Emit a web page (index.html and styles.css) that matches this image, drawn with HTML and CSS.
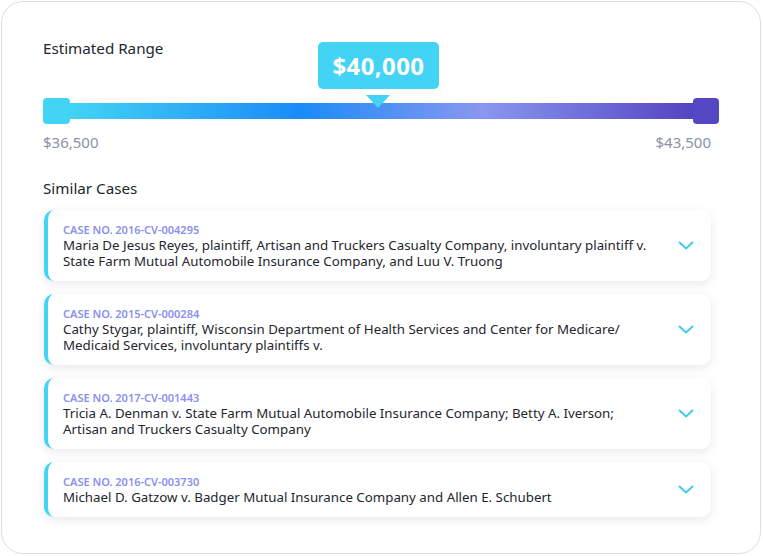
FILE: index.html
```html
<!DOCTYPE html>
<html lang="en">
<head>
<meta charset="utf-8">
<title>Estimated Range</title>
<link rel="stylesheet" href="styles.css">
</head>
<body>
<div class="panel">
  <h2 class="section-title">Estimated Range</h2>
  <div class="slider">
    <div class="tooltip">$40,000</div>
    <div class="tooltip-arrow"></div>
    <div class="thumb thumb-min"></div>
    <div class="track"></div>
    <div class="thumb thumb-max"></div>
  </div>
  <div class="range-labels">
    <span>$36,500</span>
    <span>$43,500</span>
  </div>
  <h2 class="section-title cases-title">Similar Cases</h2>
  <ul class="cases">
    <li class="case">
      <div class="case-text">
        <div class="case-no">CASE NO. 2016-CV-004295</div>
        <div class="case-name">Maria De Jesus Reyes, plaintiff, Artisan and Truckers Casualty Company, involuntary plaintiff v.<br>State Farm Mutual Automobile Insurance Company, and Luu V. Truong</div>
      </div>
      <svg class="chevron" viewBox="0 0 16 9" width="16" height="9"><path d="M1 1 L8 7.5 L15 1" fill="none" stroke="currentColor" stroke-width="2"/></svg>
    </li>
    <li class="case">
      <div class="case-text">
        <div class="case-no">CASE NO. 2015-CV-000284</div>
        <div class="case-name">Cathy Stygar, plaintiff, Wisconsin Department of Health Services and Center for Medicare/<br>Medicaid Services, involuntary plaintiffs v.</div>
      </div>
      <svg class="chevron" viewBox="0 0 16 9" width="16" height="9"><path d="M1 1 L8 7.5 L15 1" fill="none" stroke="currentColor" stroke-width="2"/></svg>
    </li>
    <li class="case">
      <div class="case-text">
        <div class="case-no">CASE NO. 2017-CV-001443</div>
        <div class="case-name">Tricia A. Denman v. State Farm Mutual Automobile Insurance Company; Betty A. Iverson;<br>Artisan and Truckers Casualty Company</div>
      </div>
      <svg class="chevron" viewBox="0 0 16 9" width="16" height="9"><path d="M1 1 L8 7.5 L15 1" fill="none" stroke="currentColor" stroke-width="2"/></svg>
    </li>
    <li class="case">
      <div class="case-text">
        <div class="case-no">CASE NO. 2016-CV-003730</div>
        <div class="case-name">Michael D. Gatzow v. Badger Mutual Insurance Company and Allen E. Schubert</div>
      </div>
      <svg class="chevron" viewBox="0 0 16 9" width="16" height="9"><path d="M1 1 L8 7.5 L15 1" fill="none" stroke="currentColor" stroke-width="2"/></svg>
    </li>
  </ul>
</div>
</body>
</html>
```
FILE: styles.css
```css
* { box-sizing: border-box; }
html, body { margin: 0; padding: 0; background: #ffffff; }
body { font-family: "Noto Sans", "Open Sans", sans-serif; color: #2b2f3b; }

.panel {
  margin: 1px;
  width: 760px;
  height: 553px;
  border: 1px solid #dcdee8;
  border-radius: 22px;
  padding: 36px 41px 0 41px;
  background: #fff;
}

.section-title {
  margin: 0;
  font-size: 15.2px;
  line-height: 20px;
  font-weight: 400;
  color: #23262f;
}

.slider {
  position: relative;
  margin-top: 40px;
  height: 26px;
  display: flex;
  align-items: center;
}
.track {
  flex: 1;
  height: 16px;
  margin: 0 -2px;
  background: linear-gradient(90deg, #43d4f4 0%, #1a8bf8 37%, #8a97f0 66%, #5443c0 100%);
}
.thumb {
  position: relative;
  z-index: 1;
  width: 27px;
  height: 26px;
  border-radius: 4px;
  flex: none;
}
.thumb-min { background: #42d3f5; }
.thumb-max { background: #5546c3; width: 26px; }

.tooltip {
  position: absolute;
  left: 275px;
  top: -56px;
  width: 121px;
  height: 47px;
  border-radius: 5px;
  background: #42d3f5;
  color: #fff;
  font-weight: 700;
  font-size: 24px;
  display: flex;
  align-items: center;
  justify-content: center;
  letter-spacing: 0.4px;
}
.tooltip-arrow {
  position: absolute;
  left: 323px;
  top: -3px;
  width: 0;
  height: 0;
  border-left: 12px solid transparent;
  border-right: 12px solid transparent;
  border-top: 13px solid #42d3f5;
  z-index: 2;
}

.range-labels {
  display: flex;
  justify-content: space-between;
  margin-top: 8px;
  padding-right: 8px;
  font-size: 15px;
  line-height: 20px;
  color: #8b91a7;
}

.cases-title { margin-top: 26px; }

.cases {
  list-style: none;
  margin: 12px 8px 0 1px;
  padding: 0;
  display: flex;
  flex-direction: column;
  gap: 13px;
}
.case {
  display: flex;
  align-items: center;
  background: #fff;
  border-left: 4px solid #42d3f5;
  border-radius: 10px;
  box-shadow: 0 3px 10px rgba(40, 44, 80, 0.10);
  padding: 12px 17px 12px 15px;
}
.case-text { flex: 1; }
.case-no {
  font-size: 11px;
  line-height: 15px;
  font-weight: 600;
  color: #8a8ff0;
}
.case-name {
  font-size: 13.3px;
  line-height: 16px;
  color: #23262f;
}
.chevron {
  margin-left: auto;
  color: #3ec9f2;
  flex: none;
}
```
